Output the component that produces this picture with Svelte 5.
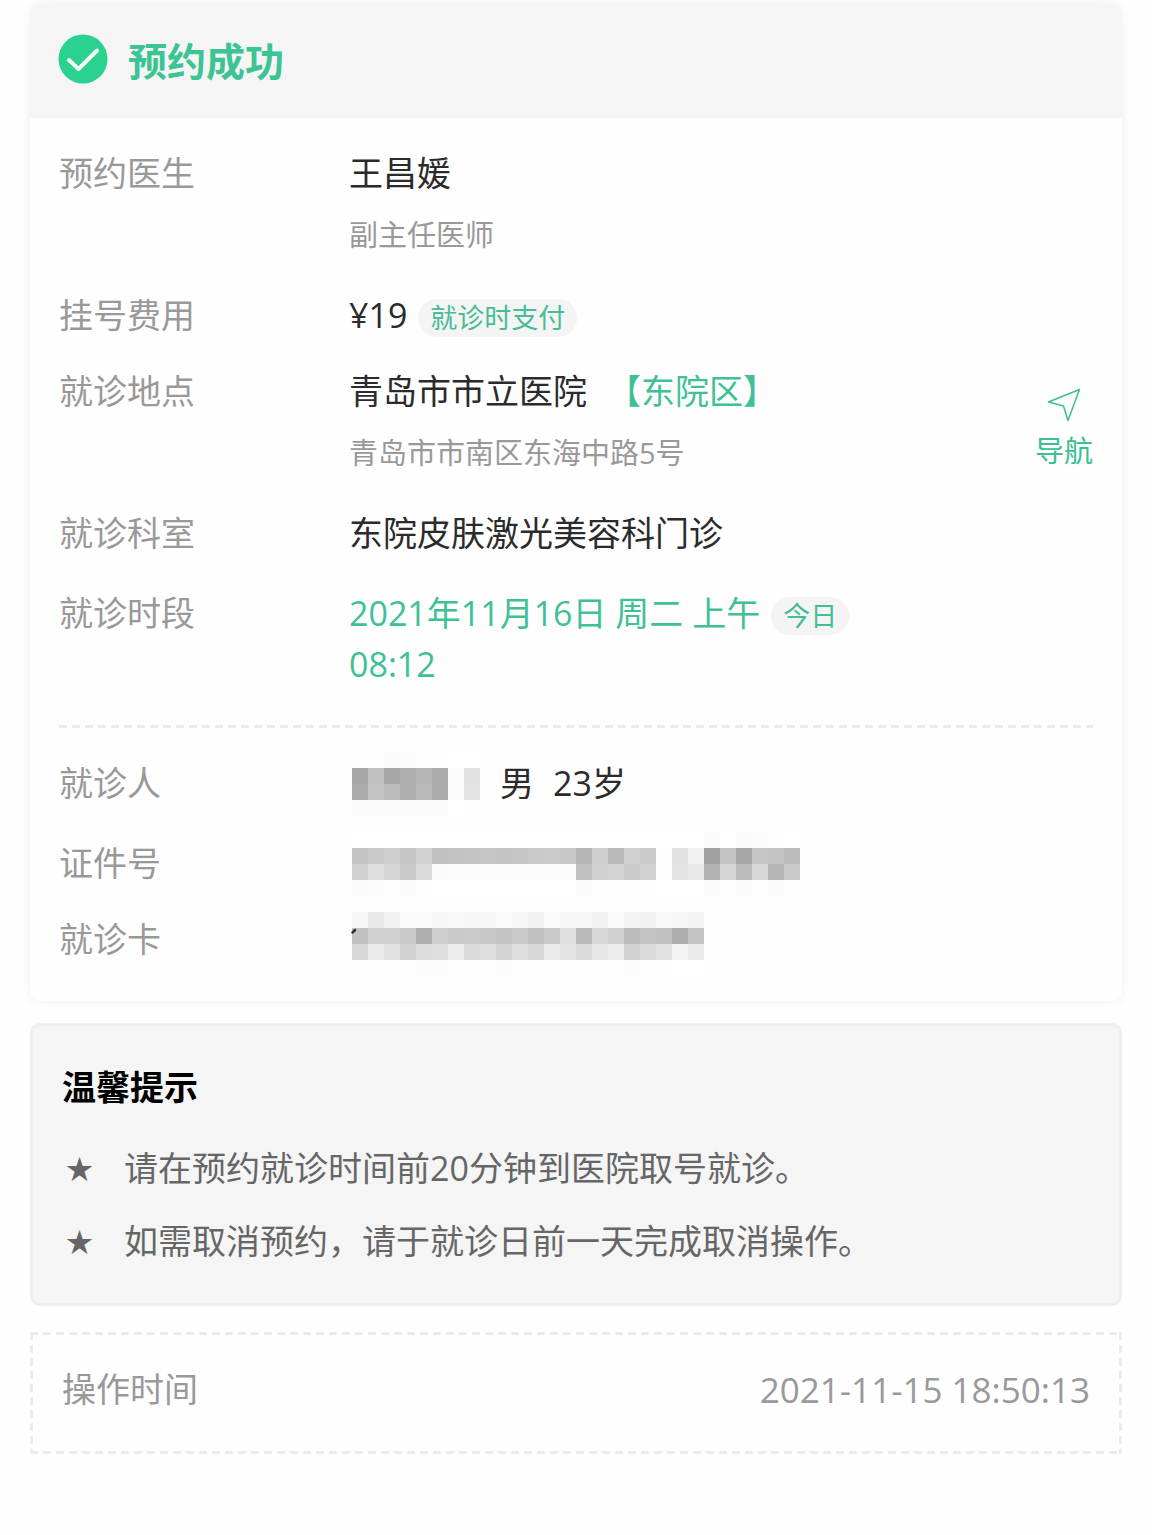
<script>
	const patient = { gender: '男', age: '23岁' };

	// Masked values: each entry is the grey level of one 16px block
	const masks = {
		name: {
			width: 149,
			top: 16,
			rows: [
				[253, 253, 250, 252, 253, 253, 255, 255],
				[167, 192, 166, 176, 182, 170, 252, 225],
				[172, 196, 187, 175, 185, 172, 252, 228],
				[250, 250, 250, 250, 250, 250, 255, 254]
			]
		},
		idNumber: {
			width: 460,
			top: 16,
			rows: [
				[
					255, 255, 255, 255, 255, 255, 255, 255, 255, 255, 255, 255, 255, 255, 255, 255, 255, 255,
					255, 255, 255, 255, 251, 255, 251, 252, 253, 255
				],
				[
					196, 200, 207, 198, 210, 192, 194, 196, 198, 196, 198, 201, 204, 199, 183, 205, 186, 208,
					203, 254, 225, 242, 161, 195, 167, 198, 196, 188
				],
				[
					208, 223, 214, 200, 218, 251, 252, 252, 252, 252, 252, 252, 252, 252, 193, 209, 212, 204,
					211, 254, 228, 232, 178, 214, 187, 216, 183, 202
				],
				[
					251, 252, 253, 251, 253, 255, 255, 255, 255, 255, 255, 255, 255, 255, 250, 253, 253, 254,
					254, 255, 255, 255, 250, 253, 251, 254, 250, 253
				]
			]
		},
		card: {
			width: 360,
			top: 12,
			rows: [
				[
					246, 232, 242, 250, 250, 247, 249, 245, 245, 250, 246, 242, 250, 247, 247, 242, 250, 244,
					240, 249, 246, 243
				],
				[
					193, 208, 208, 200, 175, 207, 202, 203, 199, 197, 202, 192, 202, 224, 186, 216, 208, 188,
					197, 192, 174, 196
				],
				[
					216, 234, 225, 211, 220, 223, 235, 218, 223, 212, 222, 216, 234, 227, 219, 231, 235, 210,
					219, 226, 243, 234
				],
				[
					253, 254, 254, 253, 252, 252, 253, 254, 254, 252, 254, 254, 254, 254, 254, 254, 254, 252,
					253, 254, 255, 255
				]
			]
		}
	};

	const tips = [
		'请在预约就诊时间前20分钟到医院取号就诊。',
		'如需取消预约，请于就诊日前一天完成取消操作。'
	];
</script>

{#snippet mask(m)}
	<svg class="mask" width={m.width} height="32" viewBox="0 {m.top} {m.width} 32" aria-hidden="true">
		{#each m.rows as row, y}
			{#each row as grey, x}
				<rect x={3 + x * 16} y={y * 16} width="16" height="16" fill="rgb({grey},{grey},{grey})" />
			{/each}
		{/each}
		{#if m === masks.card}
			<path d="M3.500 20.500L6 18" stroke="#333" stroke-width="2.500" stroke-linecap="round" />
		{/if}
	</svg>
{/snippet}

<main>
	<section class="card">
		<header>
			<svg class="check" width="50" height="50" viewBox="0 0 50 50" aria-hidden="true">
				<circle cx="25" cy="25" r="24.500" fill="#2ad18f" />
				<path
					d="M11 26L20.500 35L39 16.500"
					fill="none"
					stroke="#f4fffa"
					stroke-width="4"
					stroke-linecap="round"
					stroke-linejoin="round"
				/>
			</svg>
			<h1>预约成功</h1>
		</header>

		<dl>
			<div class="row">
				<dt>预约医生</dt>
				<dd>
					王昌媛
					<p class="sub">副主任医师</p>
				</dd>
			</div>
			<div class="row">
				<dt>挂号费用</dt>
				<dd class="inline">¥19<span class="badge">就诊时支付</span></dd>
			</div>
			<div class="row tight">
				<dt>就诊地点</dt>
				<dd>
					<span class="hospital">青岛市市立医院<span class="green">【东院区】</span></span>
					<p class="sub">青岛市市南区东海中路5号</p>
				</dd>
				<a class="nav" href="#map">
					<svg width="34" height="34" viewBox="0 0 34 34" aria-hidden="true">
						<path
							d="M32.500 1.500L1.500 14L16.500 18L21 32.500Z"
							fill="none"
							stroke="#3fbd90"
							stroke-width="1.500"
							stroke-linejoin="round"
						/>
					</svg>
					导航
				</a>
			</div>
			<div class="row">
				<dt>就诊科室</dt>
				<dd>东院皮肤激光美容科门诊</dd>
			</div>
			<div class="row">
				<dt>就诊时段</dt>
				<dd class="green">
					<div class="inline">2021年11月16日 周二 上午<span class="badge">今日</span></div>
					08:12
				</dd>
			</div>
		</dl>

		<hr />

		<dl>
			<div class="row">
				<dt>就诊人</dt>
				<dd class="patient">
					{@render mask(masks.name)}
					<span>{patient.gender}</span>
					<span>{patient.age}</span>
				</dd>
			</div>
			<div class="row">
				<dt>证件号</dt>
				<dd class="patient">{@render mask(masks.idNumber)}</dd>
			</div>
			<div class="row tight">
				<dt>就诊卡</dt>
				<dd class="patient">{@render mask(masks.card)}</dd>
			</div>
		</dl>
	</section>

	<section class="tips">
		<h2>温馨提示</h2>
		<ul>
			{#each tips as tip}
				<li><span class="star">★</span>{tip}</li>
			{/each}
		</ul>
	</section>

	<section class="time">
		<span>操作时间</span>
		<time datetime="2021-11-15T18:50:13">2021-11-15 18:50:13</time>
	</section>
</main>

<style>
	:global(body) {
		background: #fefefe;
	}

	main {
		padding: 4px 30px 80px;
		font-family: 'Open Sans', 'Noto Sans CJK SC', sans-serif;
		font-size: 34px;
		line-height: 51px;
		color: #2b2b2b;
	}

	h1,
	h2,
	p,
	dl,
	dd,
	ul {
		margin: 0;
		padding: 0;
	}

	.card {
		background: #fefefe;
		border-radius: 10px;
		box-shadow: 0 0 12px rgba(0, 0, 0, 0.06);
		padding-bottom: 36px;
	}

	header {
		display: flex;
		align-items: center;
		gap: 20px;
		padding: 26px 28px 30px;
		background: #f5f5f5;
		border-radius: 10px 10px 0 0;
	}
	h1 {
		padding-top: 4px;
		font-size: 39px;
		line-height: 54px;
		font-weight: 700;
		color: #3cc494;
	}

	dl {
		padding: 30px 29px 0;
	}
	.row {
		display: flex;
	}
	.row + .row {
		margin-top: 29px;
	}
	.row + .tight {
		margin-top: 25px;
	}
	dt {
		flex: 0 0 290px;
		color: #999;
	}
	dd {
		flex: 1;
	}
	.sub {
		margin-top: 14px;
		padding-bottom: 4px;
		font-size: 29px;
		line-height: 44px;
		color: #999;
	}
	.green {
		color: #3fc095;
	}
	.hospital {
		display: flex;
		gap: 20px;
	}
	.inline {
		display: flex;
		align-items: center;
		gap: 11px;
	}
	.badge {
		margin-top: 4px;
		padding: 0 12px;
		border-radius: 19px;
		background: #f4f4f4;
		color: #46bd95;
		font-size: 27px;
		line-height: 38px;
	}
	.nav {
		display: flex;
		flex-direction: column;
		align-items: center;
		align-self: flex-start;
		gap: 7px;
		padding-top: 22px;
		font-size: 29px;
		line-height: 44px;
		color: #3cbf91;
		text-decoration: none;
	}

	hr {
		height: 3px;
		margin: 35px 29px 0;
		border: 0;
		background: repeating-linear-gradient(90deg, #ebebeb 0 8px, transparent 8px 13px);
	}

	.patient {
		display: flex;
		align-items: center;
		gap: 19px;
		height: 51px;
	}
	.patient span:first-of-type {
		margin-left: -17px;
	}
	.mask {
		flex: none;
		overflow: visible;
	}

	.tips {
		margin-top: 22px;
		padding: 36px 29px;
		background: #f5f5f5;
		border: 3px solid #eee;
		border-radius: 10px;
	}
	h2 {
		font-size: 34px;
		line-height: 51px;
		font-weight: 700;
		color: #000;
	}
	ul {
		margin-top: 30px;
		list-style: none;
		color: #666;
	}
	li {
		display: flex;
	}
	li + li {
		margin-top: 22px;
	}
	.star {
		flex: 0 0 58px;
		padding-left: 4px;
		font-size: 27px;
	}

	.time {
		display: flex;
		justify-content: space-between;
		margin-top: 26px;
		padding: 32px 32px 39px;
		color: #999;
		background:
			repeating-linear-gradient(90deg, #ebebeb 0 8px, transparent 8px 13px) top / 100% 3px no-repeat,
			repeating-linear-gradient(90deg, #ebebeb 0 8px, transparent 8px 13px) bottom / 100% 3px no-repeat,
			repeating-linear-gradient(#ebebeb 0 8px, transparent 8px 13px) left / 3px 100% no-repeat,
			repeating-linear-gradient(#ebebeb 0 8px, transparent 8px 13px) right / 3px 100% no-repeat;
	}
	time {
		font-size: 35px;
	}
</style>
